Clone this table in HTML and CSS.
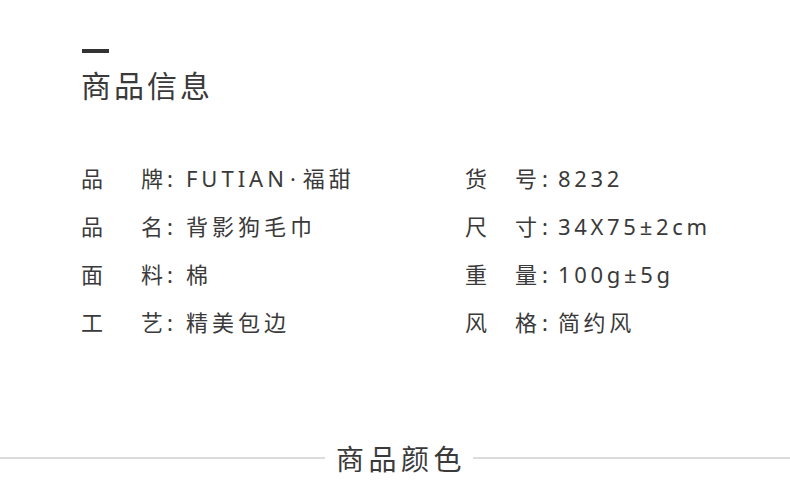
FILE: index.html
```html
<!DOCTYPE html>
<html lang="zh">
<head>
<meta charset="utf-8">
<link rel="stylesheet" href="styles.css">
</head>
<body>
<div class="page">
  <section class="info">
    <div class="bar"></div>
    <h1 class="title">商品信息</h1>
    <div class="grid">
      <div class="item left"><span class="k1">品</span><span class="k2">牌</span><span class="colon">:</span><span class="v">FUTIAN<span class="dot">·</span>福甜</span></div>
      <div class="item right"><span class="k1">货</span><span class="k2">号</span><span class="colon">:</span><span class="v">8232</span></div>
      <div class="item left"><span class="k1">品</span><span class="k2">名</span><span class="colon">:</span><span class="v">背影狗毛巾</span></div>
      <div class="item right"><span class="k1">尺</span><span class="k2">寸</span><span class="colon">:</span><span class="v">34X75±2cm</span></div>
      <div class="item left"><span class="k1">面</span><span class="k2">料</span><span class="colon">:</span><span class="v">棉</span></div>
      <div class="item right"><span class="k1">重</span><span class="k2">量</span><span class="colon">:</span><span class="v">100g±5g</span></div>
      <div class="item left"><span class="k1">工</span><span class="k2">艺</span><span class="colon">:</span><span class="v">精美包边</span></div>
      <div class="item right"><span class="k1">风</span><span class="k2">格</span><span class="colon">:</span><span class="v">简约风</span></div>
    </div>
  </section>
  <div class="divider">
    <span class="line line-left"></span>
    <span class="dtext">商品颜色</span>
    <span class="line line-right"></span>
  </div>
</div>
</body>
</html>
```

FILE: styles.css
```css
html, body {
  margin: 0;
  padding: 0;
  background: #ffffff;
}
body {
  font-family: "Noto Sans", "Noto Sans CJK SC", sans-serif;
  color: #3a3a3a;
}
.page {
  width: 790px;
  height: 492px;
  overflow: hidden;
}
.info {
  padding-left: 81px;
  padding-top: 49px;
}
.bar {
  width: 27px;
  height: 4px;
  margin-left: 1px;
  background: #333333;
}
.title {
  margin: 18px 0 0 0;
  font-size: 30px;
  line-height: 30px;
  font-weight: 400;
  letter-spacing: 3px;
  color: #3a3a3a;
}
.grid {
  margin-top: 53px;
  display: grid;
  grid-template-columns: 384px 1fr;
}
.item {
  display: flex;
  font-size: 22px;
  line-height: 48px;
  height: 48px;
  letter-spacing: 3px;
  white-space: nowrap;
}
.left .k1 { width: 60px; }
.right .k1 { width: 50px; }
.colon {
  letter-spacing: 0;
}
.left .colon { margin-left: 1px; }
.right .colon { margin-left: 2px; }
.v { letter-spacing: 4px; }
.right .v { letter-spacing: 3.7px; }
.left .v { margin-left: 13px; }
.right .v { margin-left: 10px; }
.dot { margin: 0 3px 0 2px; }
.divider {
  margin-top: 93px;
  display: flex;
  align-items: center;
  height: 40px;
}
.line {
  height: 2px;
  background: #dcdcdc;
  margin-top: -3px;
}
.line-left { width: 325px; }
.line-right { flex: 1; }
.dtext {
  margin: 0 7px 0 11px;
  font-size: 28px;
  line-height: 40px;
  letter-spacing: 4.5px;
  color: #3a3a3a;
}
```
